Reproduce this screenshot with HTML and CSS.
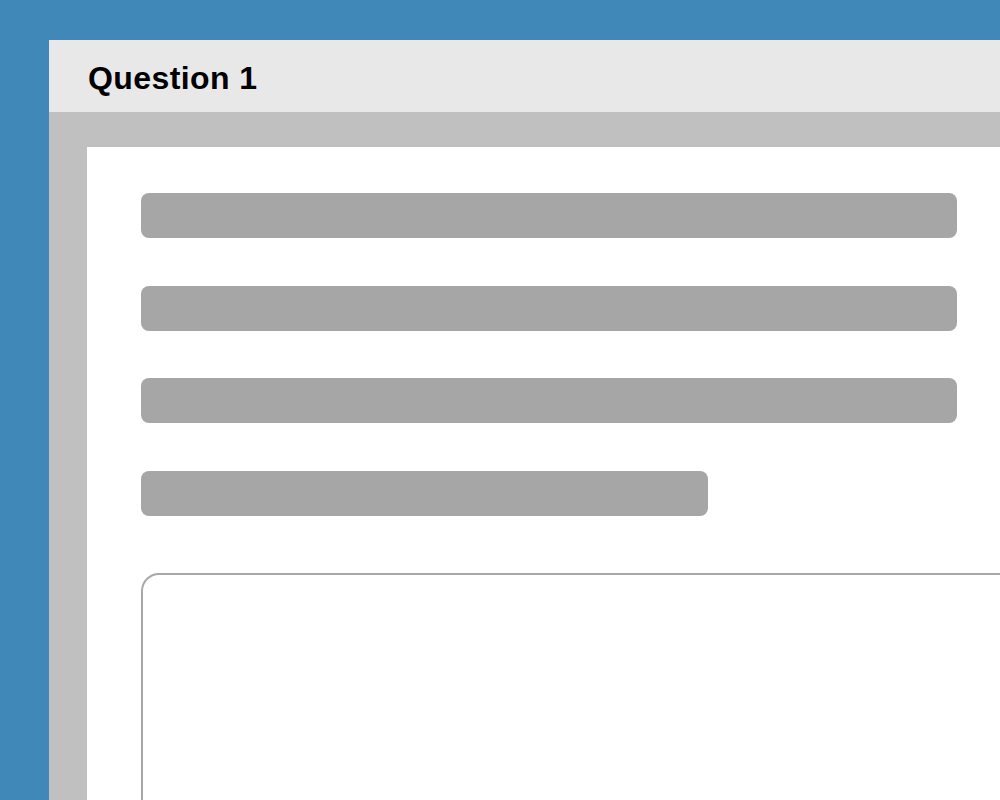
FILE: index.html
```html
<!DOCTYPE html>
<html lang="en">
<head>
  <meta charset="UTF-8">
  <meta name="viewport" content="width=device-width, initial-scale=1.0">
  <title>Question 1</title>
  <link rel="stylesheet" href="styles.css">
</head>
<body>
  <div class="panel">
    <div class="panel-header">
      <h1>Question 1</h1>
    </div>
    <div class="panel-body">
      <div class="sheet">
        <div class="line"></div>
        <div class="line"></div>
        <div class="line"></div>
        <div class="line short"></div>
        <div class="answer"></div>
      </div>
    </div>
  </div>
</body>
</html>
```

FILE: styles.css
```css
:root {
  --blue: #3f88b8;
  --header: #e8e8e8;
  --frame: #c0c0c0;
  --line: #a6a6a6;
}
* { box-sizing: border-box; margin: 0; padding: 0; }
html, body { height: 100%; }
body {
  font-family: 'Liberation Sans', Arial, sans-serif;
  background: var(--blue);
  padding: 40px 0 0 49px;
  overflow: hidden;
}
.panel {
  width: 1100px;
  height: 1000px;
  display: flex;
  flex-direction: column;
}
.panel-header {
  height: 72px;
  background: var(--header);
  display: flex;
  align-items: center;
  padding-left: 39px;
}
.panel-header h1 {
  font-size: 32px;
  font-weight: 700;
  letter-spacing: 0.4px;
  color: #000;
  padding-top: 4px;
}
.panel-body {
  flex: 1;
  background: var(--frame);
  padding: 35px 0 0 38px;
}
.sheet {
  height: 100%;
  background: #fff;
  padding: 46px 0 0 54px;
  display: flex;
  flex-direction: column;
  gap: 47.5px;
}
.line {
  width: 816px;
  height: 45px;
  background: var(--line);
  border-radius: 8px;
}
.line.short { width: 567px; }
.answer {
  margin-top: 9.5px;
  width: 1000px;
  height: 400px;
  border: 2px solid #a8a8a8;
  border-radius: 18px;
}
```
